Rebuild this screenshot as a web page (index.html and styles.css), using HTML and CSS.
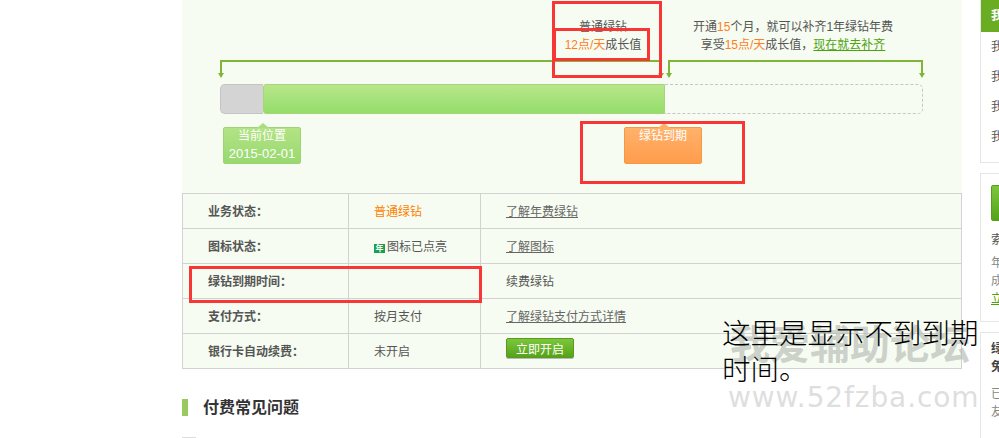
FILE: index.html
```html
<!DOCTYPE html>
<html lang="zh-CN">
<head>
    <meta charset="UTF-8">
    <meta name="viewport" content="width=device-width, initial-scale=1.0">
    <title>绿钻成长值</title>
    <link rel="stylesheet" href="styles.css">
</head>
<body>
    <div class="page">
        <div class="main">
            <div class="timeline">
                <div class="notes">
                    <div class="note note-current">
                        普通绿钻<br>
                        <span class="hot">12点/天</span>成长值
                    </div>
                    <div class="note note-year">
                        开通<span class="hot">15</span>个月，就可以补齐1年绿钻年费<br>
                        享受<span class="hot">15点/天</span>成长值，<a class="go-link" href="#">现在就去补齐</a>
                    </div>
                </div>
                <div class="brackets">
                    <div class="bracket bracket-a"></div>
                    <div class="bracket bracket-b"></div>
                </div>
                <div class="bar">
                    <div class="bar-past"></div>
                    <div class="bar-left"></div>
                    <div class="bar-empty"></div>
                </div>
                <div class="tags">
                    <div class="tag tag-now">当前位置<br><span class="tag-date">2015-02-01</span></div>
                    <div class="tag tag-end">绿钻到期</div>
                </div>
            </div>

            <table class="status">
                <tr>
                    <th>业务状态：</th>
                    <td class="orange">普通绿钻</td>
                    <td><a href="#">了解年费绿钻</a></td>
                </tr>
                <tr>
                    <th>图标状态：</th>
                    <td><span class="year-icon">年</span>图标已点亮</td>
                    <td><a href="#">了解图标</a></td>
                </tr>
                <tr>
                    <th>绿钻到期时间：</th>
                    <td></td>
                    <td>续费绿钻</td>
                </tr>
                <tr>
                    <th>支付方式：</th>
                    <td>按月支付</td>
                    <td><a href="#">了解绿钻支付方式详情</a></td>
                </tr>
                <tr>
                    <th>银行卡自动续费：</th>
                    <td>未开启</td>
                    <td class="btn-cell"><button class="open-btn">立即开启</button></td>
                </tr>
            </table>

            <h2 class="faq-title">付费常见问题</h2>
            <div class="faq-mark"></div>
        </div>

        <div class="side">
            <div class="side-box side-mine">
                <div class="side-head">我的绿钻</div>
                <ul class="side-list">
                    <li>我的成长值</li>
                    <li>我的等级</li>
                    <li>我的特权</li>
                    <li>我的订单</li>
                </ul>
            </div>
            <div class="side-box side-open">
                <div class="side-btn"></div>
                <p class="side-name">索要绿钻</p>
                <p class="side-gray">年费绿钻</p>
                <p class="side-gray">成长值</p>
                <a class="side-link" href="#">立即开通</a>
            </div>
            <div class="side-box side-free">
                <p class="side-bold">绿钻</p>
                <p class="side-bold">免费</p>
                <p class="side-gray">已有</p>
                <p class="side-gray">友情</p>
            </div>
        </div>
    </div>

    <!-- 截图上后加的标注 -->
    <div class="mark mark-1"></div>
    <div class="mark mark-2"></div>
    <div class="mark mark-3"></div>
    <div class="mark mark-4"></div>
    <div class="wm wm-cn">我爱辅助论坛</div>
    <div class="wm wm-en">www.52fzba.com</div>
    <div class="remark">这里是显示不到到期时间。</div>
</body>
</html>
```

FILE: styles.css
```css
html, body {
    height: 100%;
    overflow: hidden;
}
body {
    margin: 0;
    background-color: #fff;
    color: #555;
    font-family: "Liberation Sans", "Noto Sans CJK SC", sans-serif;
    font-size: 12px;
}
a {
    color: #666;
}
p {
    margin: 0;
}
.page {
    display: flex;
    align-items: flex-start;
    padding-left: 182px;
    width: 1100px;
}
.main {
    width: 780px;
    flex: none;
}

/* timeline */
.timeline {
    height: 193px;
    background-color: #f6fcf1;
    overflow: hidden;
}
.notes {
    display: flex;
    gap: 40px;
    margin-left: 371px;
    padding-top: 18px;
    height: 42px;
    line-height: 18px;
    text-align: center;
    white-space: nowrap;
}
.note-current {
    width: 100px;
}
.note-year {
    width: 200px;
}
.hot {
    color: #ff7e1e;
}
.go-link {
    color: #4ca30d;
}
.brackets {
    display: flex;
    gap: 6px;
    margin-left: 38px;
}
.bracket {
    position: relative;
    box-sizing: border-box;
    height: 13px;
    border: 2px solid #7fb539;
    border-bottom: none;
}
.bracket::before,
.bracket::after {
    content: "";
    position: absolute;
    top: 11px;
    border: 3px solid transparent;
    border-top: 5px solid #7fb539;
    border-bottom: none;
}
.bracket::before {
    left: -4px;
}
.bracket::after {
    right: -4px;
}
.bracket-a {
    width: 442px;
}
.bracket-b {
    width: 255px;
}
.bar {
    display: flex;
    margin: 11px 0 0 38px;
    height: 30px;
    width: 703px;
}
.bar-past {
    box-sizing: border-box;
    width: 43px;
    background-color: #d4d4d4;
    border: 1px solid #c4c4c4;
    border-right: none;
    border-radius: 5px 0 0 5px;
}
.bar-left {
    box-sizing: border-box;
    width: 402px;
    background: linear-gradient(#b8e68a, #94dd6b);
    border: 1px solid #a5d67a;
    border-radius: 3px 0 0 3px;
}
.bar-empty {
    box-sizing: border-box;
    width: 258px;
    border: 1px dashed #c6c6c6;
    border-left: none;
    border-radius: 0 5px 5px 0;
}
.tags {
    display: flex;
    gap: 323px;
    margin: 13px 0 0 41px;
}
.tag {
    position: relative;
    box-sizing: border-box;
    width: 78px;
    height: 37px;
    color: #fff;
    text-align: center;
    line-height: 17px;
    border-radius: 2px;
}
.tag-date {
    font-size: 13px;
}
.tag::before {
    content: "";
    position: absolute;
    top: -5px;
    left: 33px;
    border: 6px solid transparent;
    border-top: none;
    border-bottom-width: 5px;
}
.tag-now {
    background: linear-gradient(#b3e385, #98d96f);
    border: 1px solid #a0d277;
}
.tag-now::before {
    border-bottom-color: #aadd80;
}
.tag-end {
    background: linear-gradient(#ffb26b, #ff9c4c);
    border: 1px solid #f39a45;
}
.tag-end::before {
    border-bottom-color: #ffae68;
}

/* status table */
.status {
    width: 780px;
    table-layout: fixed;
    border-collapse: collapse;
    background-color: #f6fcf1;
}
.status th,
.status td {
    height: 35px;
    padding: 0 0 2px 25px;
    border: 1px solid #d2d2d2;
    text-align: left;
    box-sizing: border-box;
}
.status th {
    width: 166px;
    font-weight: bold;
}
.status td:nth-child(2) {
    width: 132px;
}
.orange {
    color: #ff7e00;
}
.year-icon {
    display: inline-block;
    width: 11px;
    height: 9px;
    margin-right: 2px;
    background-color: #1a9f50;
    color: #fff;
    font-size: 8px;
    font-weight: bold;
    line-height: 9px;
    text-align: center;
}
.status .btn-cell {
    vertical-align: top;
    padding-top: 4px;
}
.open-btn {
    display: block;
    width: 68px;
    height: 20px;
    padding: 0;
    border: 1px solid #5a9a1a;
    border-radius: 2px;
    background: linear-gradient(#7cc63c, #55a31a);
    box-shadow: 0 1px 0 #bbb;
    color: #fff;
    font: inherit;
}

/* faq */
.faq-title {
    margin: 30px 0 0;
    height: 17px;
    padding-left: 15px;
    border-left: 6px solid #99c95f;
    color: #333;
    font-size: 16px;
    font-weight: bold;
    line-height: 17px;
}
.faq-mark {
    margin-top: 21px;
    width: 14px;
    height: 6px;
    background-color: #ddd;
}

/* sidebar */
.side {
    flex: none;
    width: 220px;
    margin-left: 18px;
}
.side-box {
    box-sizing: border-box;
    border: 1px solid #e6e6e6;
    border-top: none;
}
.side-mine {
    height: 163px;
}
.side-head {
    height: 32px;
    padding-left: 10px;
    background-color: #6aad22;
    color: #fff;
    font-weight: bold;
    line-height: 32px;
}
.side-list {
    margin: 0;
    padding: 0 0 0 10px;
    list-style: none;
}
.side-list li {
    height: 30px;
    line-height: 30px;
}
.side-open {
    height: 149px;
    margin-top: 10px;
    padding: 11px 0 0 10px;
    border-top: 1px solid #e6e6e6;
}
.side-btn {
    width: 100px;
    height: 34px;
    margin-bottom: 10px;
    border: 1px solid #5a9a1a;
    border-radius: 2px;
    background: linear-gradient(#7cc63c, #55a31a);
}
.side-name {
    line-height: 18px;
    margin-bottom: 5px;
}
.side-gray {
    color: #888;
    line-height: 18px;
}
.side-link {
    color: #4ca30d;
    line-height: 18px;
}
.side-free {
    height: 120px;
    margin-top: 10px;
    padding: 7px 0 0 10px;
    border-top: 1px solid #e6e6e6;
}
.side-free .side-bold {
    color: #444;
    font-weight: bold;
    line-height: 18px;
}
.side-free .side-bold + .side-gray {
    margin-top: 9px;
}

/* annotations drawn over the screenshot */
.mark {
    position: absolute;
    box-sizing: border-box;
    border: 3px solid #f93636;
}
.mark-1 {
    left: 552px;
    top: 1px;
    width: 110px;
    height: 77px;
}
.mark-2 {
    left: 553px;
    top: 28px;
    width: 97px;
    height: 33px;
}
.mark-3 {
    left: 580px;
    top: 121px;
    width: 165px;
    height: 63px;
}
.mark-4 {
    left: 189px;
    top: 266px;
    width: 293px;
    height: 37px;
}
.wm {
    position: absolute;
    white-space: nowrap;
}
.wm-cn {
    left: 730px;
    top: 318px;
    color: rgba(185, 190, 185, 0.7);
    font-size: 40px;
    font-weight: bold;
    line-height: 54px;
}
.wm-en {
    left: 728px;
    top: 378px;
    color: rgba(200, 200, 200, 0.6);
    font-family: "DejaVu Sans", sans-serif;
    font-size: 28px;
    letter-spacing: 0.9px;
    line-height: 40px;
}
.remark {
    position: absolute;
    left: 722px;
    top: 316px;
    width: 262px;
    color: #000;
    font-size: 28.5px;
    font-weight: 300;
    line-height: 36px;
}
```
